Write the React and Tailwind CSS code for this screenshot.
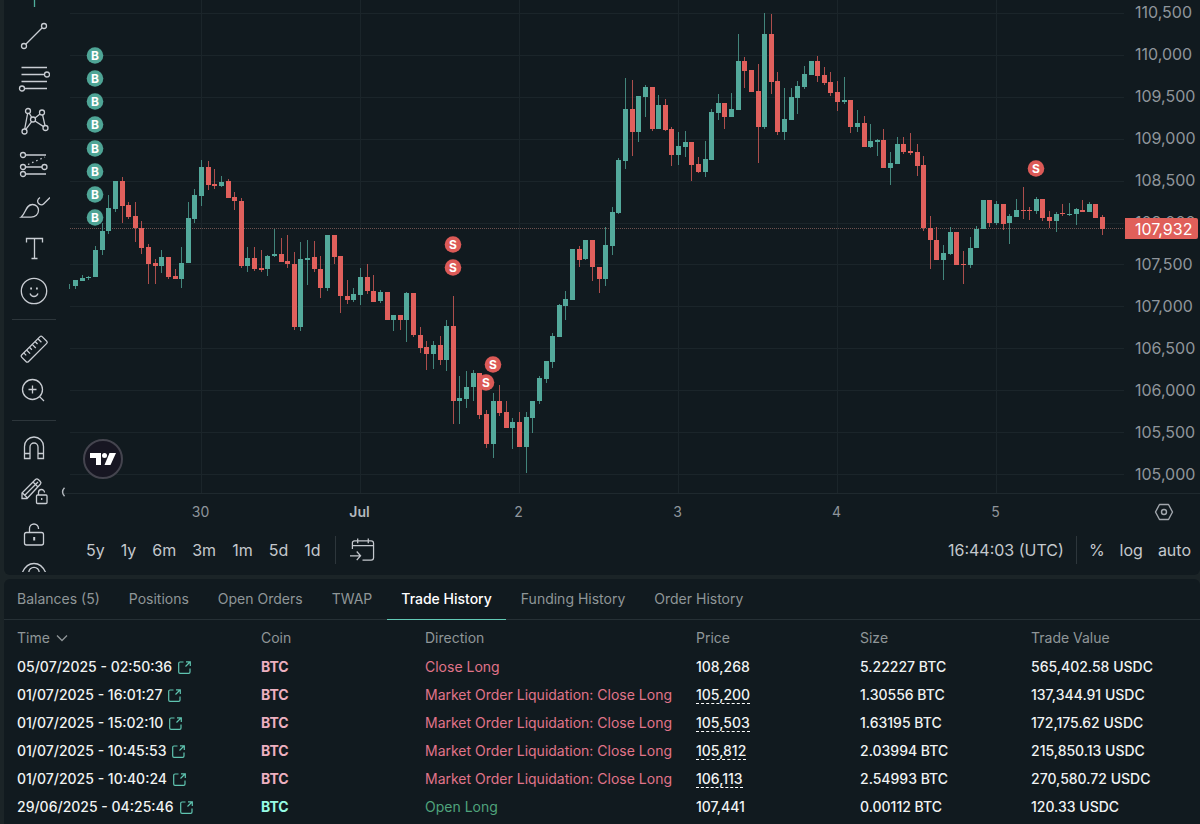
import React from 'react';
import clsx from 'clsx';

// [direction, high, body top, body bottom, low], one entry per hour
const candles = [
  ['u', 284, 285, 288, 289], ['u', 280, 280, 286, 289], ['u', 275, 278, 281, 281], ['u', 276, 277, 278, 280],
  ['u', 246, 250, 277, 277], ['u', 223, 231, 250, 255], ['u', 195, 208, 231, 234], ['u', 181, 181, 209, 212],
  ['d', 177, 181, 206, 223], ['d', 202, 205, 217, 219], ['d', 202, 216, 228, 242], ['d', 221, 228, 248, 254],
  ['d', 244, 247, 264, 284], ['d', 259, 263, 266, 284], ['u', 250, 257, 266, 273], ['d', 257, 257, 277, 279],
  ['d', 269, 276, 279, 279], ['u', 247, 263, 279, 288], ['u', 202, 218, 263, 263], ['u', 189, 195, 219, 223],
  ['u', 160, 167, 196, 206], ['d', 161, 167, 185, 190], ['d', 169, 184, 186, 189], ['u', 176, 182, 186, 187],
  ['d', 179, 181, 198, 198], ['d', 192, 197, 201, 210], ['d', 198, 201, 266, 268], ['u', 247, 258, 266, 272],
  ['d', 247, 258, 269, 271], ['d', 250, 268, 270, 272], ['u', 255, 256, 269, 276], ['u', 229, 254, 256, 257],
  ['d', 238, 254, 262, 262], ['d', 235, 261, 264, 268], ['d', 252, 264, 327, 330], ['u', 242, 259, 327, 331],
  ['u', 240, 258, 260, 285], ['d', 241, 257, 269, 272], ['d', 256, 269, 288, 298], ['u', 235, 235, 288, 291],
  ['d', 235, 235, 257, 264], ['d', 256, 256, 296, 313], ['d', 280, 296, 300, 304], ['u', 288, 294, 300, 302],
  ['u', 268, 277, 295, 305], ['d', 264, 277, 291, 294], ['d', 275, 291, 302, 302], ['u', 290, 292, 301, 303],
  ['d', 292, 292, 320, 320], ['u', 315, 315, 320, 331], ['d', 315, 315, 320, 330], ['u', 292, 293, 320, 342],
  ['d', 293, 293, 335, 337], ['d', 327, 335, 348, 353], ['d', 341, 347, 354, 370], ['u', 341, 345, 354, 369],
  ['d', 336, 345, 360, 365], ['u', 320, 326, 360, 371], ['d', 296, 326, 401, 424], ['u', 376, 398, 401, 424],
  ['u', 371, 387, 399, 408], ['u', 370, 373, 387, 401], ['d', 373, 373, 415, 419], ['d', 410, 414, 444, 448],
  ['u', 393, 401, 444, 458], ['d', 385, 401, 413, 416], ['d', 401, 412, 428, 428], ['u', 418, 422, 428, 449],
  ['d', 412, 422, 447, 447], ['u', 412, 417, 447, 473], ['u', 401, 401, 418, 433], ['u', 376, 378, 401, 404],
  ['u', 361, 361, 379, 383], ['u', 333, 336, 362, 368], ['u', 304, 305, 337, 337], ['u', 291, 299, 306, 320],
  ['u', 249, 249, 300, 300], ['d', 246, 249, 260, 267], ['u', 240, 240, 259, 260], ['d', 240, 240, 267, 281],
  ['d', 267, 267, 279, 293], ['u', 227, 245, 279, 286], ['u', 207, 212, 246, 255], ['u', 158, 160, 213, 214],
  ['u', 78, 109, 161, 169], ['d', 80, 109, 132, 156], ['u', 96, 96, 132, 142], ['u', 85, 87, 97, 117],
  ['d', 87, 87, 129, 131], ['u', 95, 105, 129, 129], ['d', 99, 105, 130, 131], ['d', 127, 129, 155, 166],
  ['u', 132, 146, 155, 165], ['u', 131, 142, 147, 157], ['d', 142, 142, 165, 181], ['d', 157, 164, 172, 173],
  ['u', 141, 159, 172, 177], ['u', 109, 112, 160, 160], ['u', 94, 103, 113, 120], ['d', 103, 103, 117, 129],
  ['u', 93, 109, 117, 117], ['u', 34, 61, 110, 110], ['d', 57, 61, 71, 88], ['d', 70, 70, 92, 92],
  ['d', 64, 91, 127, 163], ['u', 13, 34, 127, 129], ['d', 14, 34, 82, 94], ['d', 72, 81, 132, 135],
  ['u', 88, 119, 132, 140], ['u', 88, 97, 120, 120], ['u', 81, 86, 98, 114], ['u', 66, 74, 87, 89],
  ['u', 61, 61, 75, 75], ['d', 56, 61, 76, 82], ['d', 67, 75, 83, 85], ['d', 72, 82, 93, 96],
  ['d', 81, 92, 102, 111], ['u', 77, 100, 102, 104], ['d', 100, 100, 127, 133], ['u', 110, 123, 127, 132],
  ['d', 116, 123, 147, 147], ['u', 124, 141, 147, 148], ['u', 139, 140, 142, 156], ['d', 129, 140, 168, 168],
  ['u', 152, 163, 168, 185], ['u', 137, 144, 164, 164], ['d', 137, 144, 152, 154], ['d', 133, 151, 153, 155],
  ['d', 144, 152, 166, 176], ['d', 156, 165, 228, 231], ['d', 216, 228, 240, 269], ['d', 227, 240, 260, 260],
  ['u', 245, 253, 260, 280], ['u', 227, 232, 254, 255], ['d', 232, 232, 265, 265], ['d', 251, 264, 265, 284],
  ['u', 237, 248, 265, 268], ['u', 226, 229, 248, 248], ['u', 200, 200, 229, 229], ['d', 200, 200, 223, 227],
  ['u', 201, 204, 223, 225], ['d', 204, 204, 224, 230], ['u', 214, 216, 223, 244], ['u', 199, 210, 217, 217],
  ['d', 187, 210, 211, 219], ['d', 207, 210, 211, 220], ['u', 197, 199, 211, 214], ['d', 199, 199, 218, 221],
  ['d', 211, 217, 221, 228], ['u', 212, 214, 221, 232], ['d', 204, 213, 214, 216], ['u', 203, 214, 215, 216],
  ['u', 208, 209, 214, 225], ['d', 200, 210, 212, 212], ['u', 202, 204, 212, 212], ['d', 204, 204, 218, 218],
  ['d', 215, 217, 229, 235],
];

const FIRST_X = 68.5;
const STEP = 6.625;

const markers = [
  ['B', 95, 55], ['B', 95, 78], ['B', 95, 101], ['B', 95, 124],
  ['B', 95, 148], ['B', 95, 171], ['B', 95, 194], ['B', 95, 217],
  ['S', 453, 244], ['S', 453, 267], ['S', 486, 382], ['S', 493, 364], ['S', 1036, 168],
];

const prices = [
  '110,500', '110,000', '109,500', '109,000', '108,500', '108,000',
  '107,500', '107,000', '106,500', '106,000', '105,500', '105,000',
];

const days = ['30', 'Jul', '2', '3', '4', '5'];
const ranges = ['5y', '1y', '6m', '3m', '1m', '5d', '1d'];

const tabs = [
  'Balances (5)', 'Positions', 'Open Orders', 'TWAP',
  'Trade History', 'Funding History', 'Order History',
];

const LIQUIDATION = 'Market Order Liquidation: Close Long';

const trades = [
  { time: '05/07/2025 - 02:50:36', direction: 'Close Long', price: '108,268', size: '5.22227 BTC', value: '565,402.58 USDC' },
  { time: '01/07/2025 - 16:01:27', direction: LIQUIDATION, price: '105,200', size: '1.30556 BTC', value: '137,344.91 USDC' },
  { time: '01/07/2025 - 15:02:10', direction: LIQUIDATION, price: '105,503', size: '1.63195 BTC', value: '172,175.62 USDC' },
  { time: '01/07/2025 - 10:45:53', direction: LIQUIDATION, price: '105,812', size: '2.03994 BTC', value: '215,850.13 USDC' },
  { time: '01/07/2025 - 10:40:24', direction: LIQUIDATION, price: '106,113', size: '2.54993 BTC', value: '270,580.72 USDC' },
  { time: '29/06/2025 - 04:25:46', direction: 'Open Long', price: '107,441', size: '0.00112 BTC', value: '120.33 USDC' },
];

const Tool = ({ label, tall, children }) => (
  <button
    aria-label={label}
    className={clsx('flex w-full shrink-0 items-center justify-center text-[#c9cdd3] hover:text-white', tall ? 'h-[43px]' : 'h-[41px]')}
  >
    <svg width="32" height="32" viewBox="0 0 32 32" fill="none" stroke="currentColor" strokeWidth="1.3">
      {children}
    </svg>
  </button>
);

const Toolbar = () => (
  <div className="flex h-[572px] w-15 shrink-0 flex-col overflow-hidden">
    <div className="flex h-3.5 shrink-0 justify-center">
      <svg width="32" height="8" viewBox="0 0 32 8" stroke="#4fae9c" strokeWidth="1.3">
        <path d="M16.5 0v7" />
      </svg>
    </div>
    <Tool label="Trend line" tall>
      <circle cx="6" cy="26" r="2.5" />
      <circle cx="26" cy="6" r="2.5" />
      <path d="M8 24 24 8" />
    </Tool>
    <Tool label="Fib retracement" tall>
      <path d="M3.5 4.5H29M3.5 11.5h23M3.5 18.5H29M6.5 25.5H29" />
      <circle cx="29" cy="11.5" r="2.5" />
      <circle cx="4" cy="25.5" r="2.5" />
    </Tool>
    <Tool label="Patterns" tall>
      <path d="M9.6 7.5 6.7 23M11.2 7.2l2.6 4.3M17 12l5-4M24.6 9 27 19.6M17 15l8.6 5.6M13.7 15.6 7.8 23.4" />
      <circle cx="10" cy="5" r="2.5" />
      <circle cx="24" cy="6.5" r="2.5" />
      <circle cx="15" cy="13.5" r="2.5" />
      <circle cx="6.5" cy="25.5" r="2.5" />
      <circle cx="27.5" cy="22" r="2.5" />
    </Tool>
    <Tool label="Forecasting" tall>
      <path d="M7.5 6H28M7.5 18h16.5M7.5 25H28" />
      <path d="M10 15.5 27 8" strokeDasharray="1.5 3" />
      <circle cx="5" cy="6" r="2.5" />
      <circle cx="5" cy="18" r="2.5" />
      <circle cx="26.5" cy="18" r="2.5" />
      <circle cx="5" cy="25" r="2.5" />
    </Tool>
    <Tool label="Brush" tall>
      <path d="M3 25.2c5-3.5 4.5-12.7 11.5-12.7 3.7 0 6 2.7 6 5.8 0 4-3.2 6.9-7.5 6.9z" />
      <path d="M22 5.5c-2.6 1.6-3 4.2-1.4 6 1.5 1.7 3.7 1.7 5.2.2L32 5.5" />
    </Tool>
    <Tool label="Text">
      <path d="M8.5 8.5v-4h16v4M16.5 4.5v20M13.5 24.5h6" />
    </Tool>
    <Tool label="Icons">
      <circle cx="16" cy="16" r="12.7" />
      <path d="M12 18.5c.8 2 2.3 3 4 3s3.2-1 4-3" />
      <path d="M12.2 13.5h1.8M18 13.5h1.8" strokeWidth="2" />
    </Tool>
    <hr className="mx-2 my-2 shrink-0 border-[#2d363b]" />
    <Tool label="Measure">
      <g transform="rotate(-45 16 16)">
        <rect x="1.5" y="11.5" width="29" height="9.5" rx="1.5" />
        <path d="M6 11.5v3.5M10 11.5v5M14 11.5v3.5M18 11.5v5M22 11.5v3.5M26 11.5v5" />
      </g>
    </Tool>
    <Tool label="Zoom in">
      <circle cx="14.5" cy="15.5" r="10" />
      <path d="M21.6 22.6 26 27M10.5 15.5h8M14.5 11.5v8" />
    </Tool>
    <hr className="mx-2 mt-2.5 mb-1.5 shrink-0 border-[#2d363b]" />
    <Tool label="Magnet mode" tall>
      <path d="M6.5 25.5V13.5a9.5 9.5 0 0 1 19 0v12h-5.500V14a4 4 0 0 0-8 0v11.500zM6.5 20.5H12M20 20.5h5.5" />
    </Tool>
    <Tool label="Stay in drawing mode" tall>
      <path d="M4 22.5v-5.500L17.5 3.500a2 2 0 0 1 2.800 0l2 2a2 2 0 0 1 0 2.800L9 22.500zM6.5 19.5 20 6M15 6l5 5M4.500 17l5 5" />
      <rect x="18.5" y="19" width="10.5" height="8.5" rx="1" />
      <path d="M20.5 19v-2.500a3 3 0 0 1 6 0M23.7 22v2" />
    </Tool>
    <Tool label="Lock drawings" tall>
      <rect x="6.5" y="13.5" width="19" height="12.5" rx="2" />
      <path d="M11.5 13.5V9.500a4.500 4.500 0 0 1 9 0v.5" />
      <path d="M16.2 18v3.500" strokeWidth="2" />
    </Tool>
    <Tool label="Hide drawings" tall>
      <path d="M4 11.5C6.5 5 11 1.500 16 1.500S25.5 5 28 11.500" />
      <circle cx="16" cy="10.5" r="5.2" />
    </Tool>
  </div>
);

const CandleChart = () => (
  <svg
    className="block h-[493px] w-full"
    viewBox="64 0 1060 493"
    preserveAspectRatio="xMaxYMin slice"
    role="img"
    aria-label="BTC price"
  >
    <g stroke="#1b252a">
      {prices.map((p, i) => (
        <path key={p} d={`M70 ${Math.round(13 + i * 41.9) + 0.5}H1124`} />
      ))}
      {days.map((d, i) => (
        <path key={d} d={`M${201.5 + i * 159} 0V493`} />
      ))}
    </g>
    <path d="M70 228.5H1124" stroke="#6f5250" strokeDasharray="1 1" />
    {candles.map(([dir, high, top, bottom, low], i) => {
      const x = Math.round(FIRST_X + i * STEP);
      const color = dir === 'u' ? '#53a99b' : '#e0605c';
      return (
        <g key={i} fill={color}>
          <rect x={x} y={high} width="1" height={low - high} opacity="0.75" />
          {i > 0 && <rect x={x - 2} y={top} width="5" height={Math.max(bottom - top, 1)} />}
        </g>
      );
    })}
    {markers.map(([side, x, y]) => (
      <g key={`${x}-${y}`}>
        <circle cx={x} cy={y + 0.5} r="8.3" fill={side === 'B' ? '#4fa596' : '#dc5a57'} />
        <text x={x} y={y + 5} textAnchor="middle" fill="#fff" className="text-xs font-bold">{side}</text>
      </g>
    ))}
  </svg>
);

const PriceAxis = () => (
  <div className="relative h-[493px] w-[76px] shrink-0 overflow-hidden">
    <div className="-mt-[9px]">
      {prices.map((p) => (
        <div key={p} className="flex h-[42px] items-center pl-[11px] text-base text-[#8f959b]">{p}</div>
      ))}
    </div>
    <div className="absolute top-[218px] right-0.5 left-px flex h-[21px] items-center rounded-r-xs bg-[#e0605a] pl-2.5 text-base text-white">
      107,932
    </div>
  </div>
);

const TradingViewLogo = () => (
  <a
    href="#tradingview"
    aria-label="TradingView"
    className="absolute bottom-3.5 left-[19px] flex size-10 items-center justify-center rounded-full border-2 border-[#44444e] bg-[#171622]"
  >
    <svg width="26" height="14" viewBox="0 0 26 14" fill="#fff">
      <path d="M0 1h11v12H6V6H0z" />
      <circle cx="14.5" cy="3.5" r="2.5" />
      <path d="M19.5 1H26l-5.500 12h-6z" />
    </svg>
  </a>
);

const ChartPanel = () => (
  <section className="flex h-[575px] overflow-hidden rounded-b-md bg-[#111a1f]">
    <Toolbar />
    <div className="flex min-w-0 flex-1 flex-col">
      <div className="flex border-b border-[#1f292e]">
        <div className="relative min-w-0 flex-1">
          <CandleChart />
          <TradingViewLogo />
          <button aria-label="Collapse toolbar" className="absolute -bottom-1 -left-1 text-[#b4b9be]">
            <svg width="6" height="10" viewBox="0 0 6 10" fill="none" stroke="currentColor" strokeWidth="1.4">
              <path d="M4.5 .8C2 3.500 2 6.500 4.500 9.200" />
            </svg>
          </button>
        </div>
        <PriceAxis />
      </div>
      <div className="flex h-9 items-center">
        <div className="flex min-w-0 flex-1 justify-end overflow-hidden pr-[49px] text-sm text-[#8f959b]">
          {days.map((d) => (
            <span key={d} className={clsx('w-[159px] shrink-0 text-center', d === 'Jul' && 'font-semibold text-[#b3b8bd]')}>{d}</span>
          ))}
        </div>
        <button aria-label="Axis settings" className="flex w-[76px] justify-center pl-1 text-[#a2a7ad]">
          <svg width="20" height="18" viewBox="0 0 20 18" fill="none" stroke="currentColor" strokeWidth="1.4">
            <path d="M5.5 1.5h9L18.5 9l-4 7.500h-9L1.500 9z" strokeLinejoin="round" />
            <circle cx="10" cy="9" r="2.5" />
          </svg>
        </button>
      </div>
      <div className="flex h-10 items-center pr-[9px] pl-[22px] text-base text-[#c4c8cd]">
        <div className="flex gap-4">
          {ranges.map((r) => (
            <button key={r}>{r}</button>
          ))}
        </div>
        <span className="ml-3.5 h-7 w-px bg-[#2d363b]" />
        <button aria-label="Go to date" className="ml-3.5">
          <svg width="25" height="25" viewBox="0 0 26 26" fill="none" stroke="currentColor" strokeWidth="1.3">
            <path d="M2.5 11.5V5a2 2 0 0 1 2-2H22a2.500 2.500 0 0 1 2.500 2.500v15A2.500 2.500 0 0 1 22 23h-9M2.500 8h22M8 .5v5M19 .5v5M0 18.500h10.500M7 14l4 4.500L7 23" />
          </svg>
        </button>
        <button className="ml-auto">16:44:03 (UTC)</button>
        <span className="mx-3 h-7 w-px bg-[#2d363b]" />
        <div className="flex gap-[15px]">
          <button>%</button>
          <button>log</button>
          <button>auto</button>
        </div>
      </div>
    </div>
  </section>
);

const ExternalLink = () => (
  <svg width="13" height="13" viewBox="0 0 13 13" fill="none" stroke="#5fc4b0" strokeWidth="1.2">
    <path d="M5.5 1H2a1.300 1.300 0 0 0-1.300 1.300V11A1.300 1.300 0 0 0 2 12.300h8.700A1.300 1.300 0 0 0 12 11V7.500M8 .8h4.300V5M12 1 7.500 5.500" />
  </svg>
);

const TradeRow = ({ trade }) => {
  const isOpen = trade.direction === 'Open Long';
  return (
    <tr className="h-7">
      <td className="pl-[13px]">
        <span className="flex items-center gap-1.5">
          {trade.time}
          <a href="#tx" aria-label="View transaction"><ExternalLink /></a>
        </span>
      </td>
      <td className={clsx('pl-[13px] font-bold', isOpen ? 'text-[#97fce4]' : 'text-[#edb0c0]')}>BTC</td>
      <td className={clsx('pl-[13px] font-normal', isOpen ? 'text-[#4fa37c]' : 'text-[#e0748a]')}>{trade.direction}</td>
      <td className="pl-[13px]">
        <span className={clsx(trade.direction === LIQUIDATION && 'border-b border-dashed border-white')}>{trade.price}</span>
      </td>
      <td className="pl-[13px]">{trade.size}</td>
      <td className="pl-[13px]">{trade.value}</td>
    </tr>
  );
};

const HistoryPanel = () => (
  <section className="flex-1 rounded-t-md bg-[#111a1f] text-sm">
    <nav className="flex h-[41px] gap-px border-b border-[#263035]">
      {tabs.map((tab) => (
        <button
          key={tab}
          className={clsx(
            '-mb-px border-b px-3.5 first:pl-[13px]',
            tab === 'Trade History' ? 'border-b-[#62c9b5] font-medium text-white' : 'border-b-transparent text-[#8f9698]'
          )}
        >
          {tab}
        </button>
      ))}
    </nav>
    <table className="w-full table-fixed text-left">
      <thead className="text-[#8f9698]">
        <tr className="h-[33px]">
          <th className="w-[244px] pt-0.5 pl-[13px] font-normal">
            <button className="flex items-center gap-1.5">
              Time
              <svg width="12" height="8" viewBox="0 0 12 8" fill="none" stroke="currentColor" strokeWidth="1.3">
                <path d="M1 1.5 6 6.500l5-5" />
              </svg>
            </button>
          </th>
          <th className="w-[164px] pt-0.5 pl-[13px] font-normal">Coin</th>
          <th className="w-[271px] pt-0.5 pl-[13px] font-normal">Direction</th>
          <th className="w-[164px] pt-0.5 pl-[13px] font-normal">Price</th>
          <th className="w-[171px] pt-0.5 pl-[13px] font-normal">Size</th>
          <th className="pt-0.5 pl-[13px] font-normal">Trade Value</th>
        </tr>
      </thead>
      <tbody className="font-medium text-[#f0f3f3]">
        {trades.map((trade) => (
          <TradeRow key={trade.time} trade={trade} />
        ))}
      </tbody>
    </table>
  </section>
);

const App = () => (
  <div className="flex min-h-screen flex-col gap-1 bg-[#1b2427] pl-1 font-['Inter',sans-serif]">
    <ChartPanel />
    <HistoryPanel />
  </div>
);

export default App;
